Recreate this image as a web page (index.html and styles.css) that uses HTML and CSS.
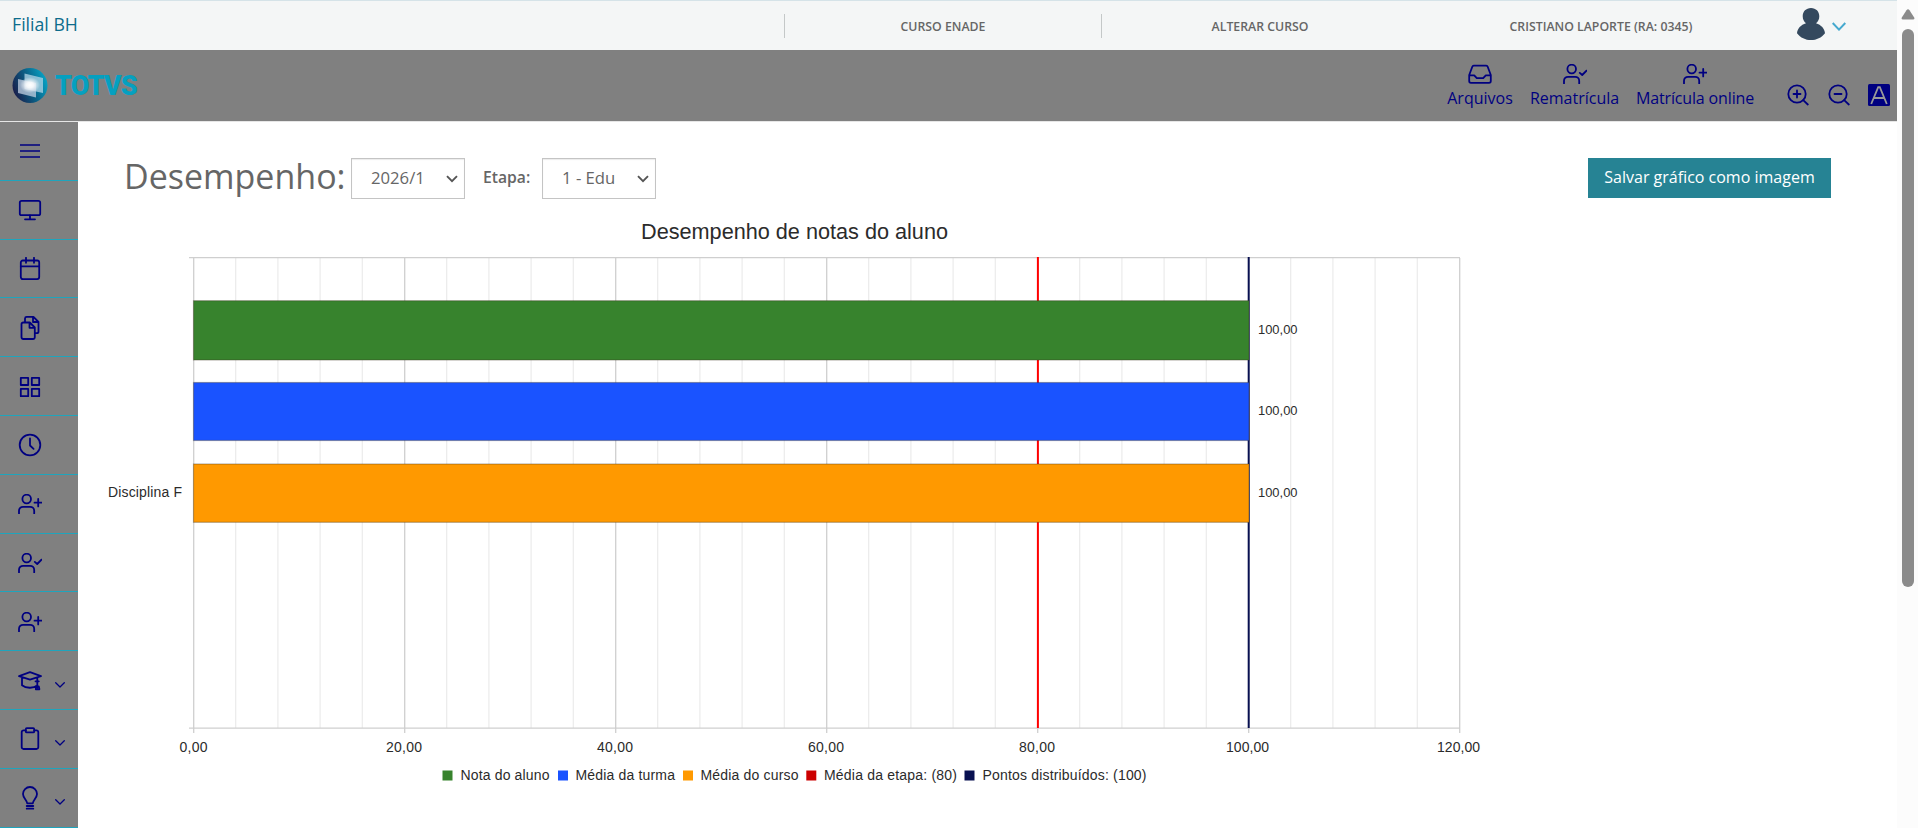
FILE: index.html
```html
<!DOCTYPE html>
<html lang="pt-BR">
<head>
<meta charset="utf-8">
<title>Desempenho</title>
<link rel="stylesheet" href="styles.css">
</head>
<body>
<svg class="defs" width="0" height="0">
  <defs>
    <symbol id="user-plus" viewBox="0 0 24 20"><circle cx="8.7" cy="5" r="4.3"/><path d="M1 19.5v-2.7a4 4 0 0 1 4-4h7.200a4 4 0 0 1 4 4v2.700M20.200 5v7.400M16.500 8.700h7.400"/></symbol>
    <symbol id="user-check" viewBox="0 0 24 20"><circle cx="8.700" cy="5" r="4.300"/><path d="M1 19.500v-2.700a4 4 0 0 1 4-4h7.200a4 4 0 0 1 4 4v2.700M16.800 8.900l2.400 2.100 4.300-4.400"/></symbol>
    <symbol id="chev" viewBox="0 0 10 6"><path d="M.7.7 5 5 9.300.7"/></symbol>
  </defs>
</svg>
<div class="app">
  <div class="page">
    <header class="topbar">
      <div class="branch"><span class="t-branch">Filial BH</span></div>
      <div class="cell">
        <span class="t-enade">CURSO ENADE</span>
      </div>
      <div class="cell">
        <span class="t-alterar">ALTERAR CURSO</span>
      </div>
      <div class="cell last">
        <span class="t-user">CRISTIANO LAPORTE (RA: 0345)</span>
      </div>
      <div class="account">
        <svg class="avatar" width="30" height="32" viewBox="0 0 30 32"><path d="M15 0c5 0 8.300 3.600 8.300 8.200 0 3-1.300 5.500-3.300 7 5.200 1.600 8.600 5.300 9 10C25.500 29.800 20.500 32 15 32S4.500 29.800 1 25.200c.4-4.700 3.800-8.400 9-10-2-1.500-3.300-4-3.300-7C6.700 3.600 10 0 15 0z"/></svg>
        <svg class="caret" width="14" height="9" viewBox="0 0 14 9"><path d="M.7 1 7 7.600 13.300 1"/></svg>
      </div>
    </header>

    <div class="header">
      <div class="logo">
        <svg width="36" height="36" viewBox="0 0 36 36">
          <defs>
            <linearGradient id="ball" x1="0" y1=".7" x2="1" y2=".3"><stop offset="0" stop-color="#1a1a48"/><stop offset=".5" stop-color="#0b5f85"/><stop offset="1" stop-color="#06a6c8"/></linearGradient>
            <radialGradient id="glow"><stop offset="0" stop-color="#fff"/><stop offset=".35" stop-color="#fff" stop-opacity=".85"/><stop offset="1" stop-color="#fff" stop-opacity="0"/></radialGradient>
          </defs>
          <circle cx="18" cy="17.500" r="17.500" fill="url(#ball)"/>
          <path d="M12.500 5.500 31 10v15l-18.500-4z" fill="#a9cfe2" opacity=".8"/>
          <path d="M6 11l18 4v14.500L6 25z" fill="#c3cfe2" opacity=".75"/>
          <ellipse cx="18" cy="17" rx="10" ry="8" fill="url(#glow)"/>
        </svg>
        <span class="wordmark">TOTVS</span>
      </div>
      <nav class="shortcuts">
        <a class="shortcut"><svg class="ic" width="24" height="20" viewBox="0 0 24 20"><path d="M1.200 11v6a1.800 1.800 0 0 0 1.800 1.800h18a1.800 1.800 0 0 0 1.800-1.800v-6L19.700 2.700a1.500 1.500 0 0 0-1.400-1H5.700a1.500 1.500 0 0 0-1.400 1zM1.200 11.300h5l2.600 2.900h6.400l2.600-2.900h5"/></svg><span class="t-arq">Arquivos</span></a>
        <a class="shortcut s2"><svg class="ic" width="24" height="20"><use href="#user-check"/></svg><span class="t-rem">Rematrícula</span></a>
        <a class="shortcut s3"><svg class="ic" width="24" height="20"><use href="#user-plus"/></svg><span class="t-mat">Matrícula online</span></a>
      </nav>
      <div class="tools">
        <svg class="ic" width="22" height="22" viewBox="0 0 22 22"><circle cx="10" cy="10" r="8.700"/><path d="M16.200 16.200l4.600 4.300M10 6.500v7M6.500 10h7"/></svg>
        <svg class="ic" width="22" height="22" viewBox="0 0 22 22"><circle cx="10" cy="10" r="8.700"/><path d="M16.200 16.200l4.600 4.300M6.500 10h7"/></svg>
        <svg class="contrast" width="22" height="22" viewBox="0 0 22 22"><rect width="22" height="22" rx="1.500"/><path d="M3.200 20 10.200 3.200h1.600L18.800 20M5.800 14h10.400"/></svg>
      </div>
    </div>

    <div class="body">
      <nav class="sidebar">
        <a class="item"><svg class="ic menu" width="24" height="24" viewBox="0 0 24 24"><path d="M2 6h20M2 12h20M2 18h20"/></svg></a>
        <a class="item"><svg class="ic" width="24" height="24" viewBox="0 0 24 24"><rect x="1.800" y="2.800" width="20.400" height="14.400" rx="1.800"/><path d="M12 17.500v3.500M7 21.300h10"/></svg></a>
        <a class="item"><svg class="ic" width="24" height="24" viewBox="0 0 24 24"><rect x="2.800" y="3.500" width="18.400" height="18.600" rx="2"/><path d="M2.800 9.300h18.400M8 .8v5M16 .8v5"/></svg></a>
        <a class="item"><svg class="ic" width="24" height="24" viewBox="0 0 24 24"><path d="M7 6V2.500A1.700 1.700 0 0 1 8.700.9h6.800L20.500 6v9.500a1.700 1.700 0 0 1-1.700 1.700h-1.500M15 1.200V6h5.200M5.200 6.500h6.600l5 5v9.800a1.700 1.700 0 0 1-1.700 1.700H5.200a1.700 1.700 0 0 1-1.700-1.700V8.200a1.700 1.700 0 0 1 1.700-1.700zM11.500 6.800v5h5"/></svg></a>
        <a class="item"><svg class="ic" width="24" height="24" viewBox="0 0 24 24"><path d="M2.800 2.800h7.400v7.200H2.800zM13.800 2.800h7.400v7.200h-7.400zM2.800 13.800h7.400v7.400H2.800zM13.800 13.800h7.400v7.400h-7.400z"/></svg></a>
        <a class="item"><svg class="ic" width="24" height="24" viewBox="0 0 24 24"><circle cx="12" cy="12" r="10.300"/><path d="M12 5.500v7l3.600 3.400"/></svg></a>
        <a class="item"><svg class="ic" width="24" height="20"><use href="#user-plus"/></svg></a>
        <a class="item"><svg class="ic" width="24" height="20"><use href="#user-check"/></svg></a>
        <a class="item"><svg class="ic" width="24" height="20"><use href="#user-plus"/></svg></a>
        <a class="item"><svg class="ic" width="24" height="24" viewBox="0 0 24 24"><path d="M1 7.200 12 3.200l11 4-11 3.500zM4 8.800v7.500c4 3.200 11.500 3.200 15 .5M19.300 8.500V19"/><path d="M17.500 12.300h3.300M18 17.500h2.800l.6 2.800h-3.600z"/></svg><svg class="ic more" width="10" height="6"><use href="#chev"/></svg></a>
        <a class="item"><svg class="ic" width="24" height="24" viewBox="0 0 24 24"><path d="M7.800 3.400H5.500a1.800 1.800 0 0 0-1.800 1.800v15a1.800 1.800 0 0 0 1.800 1.800h13a1.800 1.800 0 0 0 1.800-1.800v-15a1.800 1.800 0 0 0-1.800-1.800h-2.300"/><rect x="7.800" y="1.200" width="8.400" height="4.200" rx="1"/></svg><svg class="ic more" width="10" height="6"><use href="#chev"/></svg></a>
        <a class="item"><svg class="ic" width="24" height="24" viewBox="0 0 24 24"><path d="M9.200 17.300c0-3-4.200-5-4.200-9.300a7 7 0 0 1 14 0c0 4.300-4.200 6.300-4.200 9.300zM8.700 20h6.600M8.700 22.700h6.600"/></svg><svg class="ic more" width="10" height="6"><use href="#chev"/></svg></a>
      </nav>

      <main class="content">
        <div class="filters">
          <h1 class="title"><span class="t-title">Desempenho:</span></h1>
          <div class="select"><span class="t-year">2026/1</span><svg width="12" height="8" viewBox="0 0 12 8"><path d="M1 1.200l5 5 5-5"/></svg></div>
          <label class="etapa"><span class="t-etapa">Etapa:</span></label>
          <div class="select"><span class="t-edu">1 - Edu</span><svg width="12" height="8" viewBox="0 0 12 8"><path d="M1 1.200l5 5 5-5"/></svg></div>
          <button class="save"><span class="t-save">Salvar gráfico como imagem</span></button>
        </div>
        <svg class="chart" width="1400" height="590" viewBox="100 210 1400 590">
          <path class="minor" d="M235.700 258V728M277.900 258V728M320.100 258V728M362.300 258V728M446.700 258V728M488.900 258V728M531.100 258V728M573.300 258V728M657.700 258V728M699.900 258V728M742.100 258V728M784.300 258V728M868.700 258V728M910.900 258V728M953.100 258V728M995.300 258V728M1079.700 258V728M1121.900 258V728M1164.100 258V728M1206.300 258V728M1290.700 258V728M1332.900 258V728M1375.100 258V728M1417.300 258V728"/>
          <path class="major" d="M193.700 258V733M404.700 258V733M615.700 258V733M826.700 258V733M1037.700 258V733M1248.700 258V733M1459.700 258V733M189 257.700H1460M189 728.200H1460"/>
          <path class="goal" d="M1037.900 257V728"/>
          <path class="total" d="M1248.700 257V728"/>
          <g class="bars">
            <rect x="193.500" y="300.700" width="1055.500" height="59.300" fill="#37832d"/>
            <rect x="193.500" y="382.500" width="1055.500" height="58" fill="#1a53ff"/>
            <rect x="193.500" y="464" width="1055.500" height="58.300" fill="#ff9900"/>
          </g>
          <text class="ctitle" x="641" y="239" textLength="307" lengthAdjust="spacingAndGlyphs">Desempenho de notas do aluno</text>
          <text x="1258" y="334" textLength="39.500" lengthAdjust="spacingAndGlyphs">100,00</text>
          <text x="1258" y="415" textLength="39.500" lengthAdjust="spacingAndGlyphs">100,00</text>
          <text x="1258" y="497" textLength="39.500" lengthAdjust="spacingAndGlyphs">100,00</text>
          <g class="axis">
            <text x="108" y="497" textLength="74">Disciplina F</text>
            <text x="179.500" y="752" textLength="28">0,00</text>
            <text x="386" y="752" textLength="36">20,00</text>
            <text x="597" y="752" textLength="36">40,00</text>
            <text x="808" y="752" textLength="36">60,00</text>
            <text x="1019" y="752" textLength="36">80,00</text>
            <text x="1226" y="752" textLength="43">100,00</text>
            <text x="1437" y="752" textLength="43">120,00</text>
            <text x="460.500" y="780" textLength="89">Nota do aluno</text>
            <text x="575.500" y="780" textLength="99.500">Média da turma</text>
            <text x="700.500" y="780" textLength="98">Média do curso</text>
            <text x="824" y="780" textLength="133">Média da etapa: (80)</text>
            <text x="982.500" y="780" textLength="164">Pontos distribuídos: (100)</text>
          </g>
          <g>
            <rect x="442.500" y="770.500" width="10" height="10" fill="#37832d"/>
            <rect x="558" y="770.500" width="10" height="10" fill="#1a53ff"/>
            <rect x="683" y="770.500" width="10" height="10" fill="#ff9900"/>
            <rect x="806.300" y="770.500" width="10" height="10" fill="#cc0000"/>
            <rect x="964.500" y="770.500" width="10" height="10" fill="#081050"/>
          </g>
        </svg>
      </main>
    </div>
  </div>
  <div class="scrollbar">
    <svg width="14" height="11" viewBox="0 0 14 11"><path d="M5.500 1.200 L.8 8.500 Q0 10.500 2 10.500 H12 Q14 10.500 13.200 8.500 L8.500 1.200 Q7-.6 5.500 1.200z"/></svg>
    <div class="thumb"></div>
  </div>
</div>
</body>
</html>
```
FILE: styles.css
```css
* { box-sizing: border-box; }
body {
  margin: 0;
  height: 828px;
  overflow: hidden;
  background: #fff;
  font-family: "Open Sans", "Noto Sans", sans-serif;
  color: #666;
}
.defs { display: block; }
.app { display: flex; height: 828px; }
.page { width: 1897px; }
.topbar {
  display: flex;
  height: 50px;
  border-top: 1px solid #d5e3e8;
  background: #f4f6f6;
}
.branch { width: 784px; padding: 12px 0 0 12px; font-size: 17.7px; line-height: 22px; color: #0c6c8c; }
.cell {
  display: flex;
  width: 317px;
  height: 24px;
  margin-top: 13px;
  align-items: center;
  justify-content: center;
  border-left: 1px solid #c4c8c8;
  font-size: 12.3px;
  font-weight: 600;
}
.cell.last { width: 365px; border-left-color: transparent; }
.account { display: flex; gap: 6px; padding: 7px 0 0 13px; }
.avatar { fill: #34495e; }
.caret { margin-top: 14px; fill: none; stroke: #45a9cf; stroke-width: 2; }
.header {
  display: flex;
  height: 72px;
  background: #808080;
  border-bottom: 1px solid #e6e6e6;
}
.logo { display: flex; flex: 1; gap: 7px; padding: 18px 0 0 12px; }
.wordmark { font: 900 27px/37px Roboto, "Open Sans", sans-serif; letter-spacing: -.9px; color: #05a0c0; }
.ic { display: block; flex: none; fill: none; stroke: #000080; stroke-width: 1.8; stroke-linejoin: round; stroke-linecap: round; }
.shortcuts { display: flex; padding-top: 14px; gap: 17px; }
.shortcut { display: flex; flex-direction: column; align-items: center; color: #000080; font-size: 16px; line-height: 24px; width: 66px; white-space: nowrap; }
.shortcut span { margin-top: 2px; }
.s2 { width: 89px; }
.s3 { width: 118px; letter-spacing: -.15px; }
.tools { display: flex; gap: 19px; width: 143px; padding: 34px 0 0 33px; }
.contrast { margin-left: -1px; fill: #000080; }
.contrast path { fill: none; stroke: #999; stroke-width: 1.8; }
.body { display: flex; height: 706px; }
.sidebar { width: 78px; background: #808080; }
.item {
  display: flex;
  height: 58.8px;
  align-items: center;
  padding: 1px 0 0 18px;
  border-bottom: 1px solid #1fa5bd;
}
.menu { stroke-width: 1.4; stroke-linecap: butt; }
.more { margin: 8px 0 0 13px; stroke-width: 1.3; }
.content { flex: 1; }
.filters { display: flex; height: 88px; padding: 36px 66px 0 46px; }
.title { margin: 0; width: 227px; font-size: 34px; font-weight: 400; letter-spacing: 0; line-height: 37px; white-space: nowrap; }
.title span { display: block; }
.select {
  display: flex;
  width: 114px;
  height: 41px;
  padding: 0 6px 0 19px;
  align-items: center;
  justify-content: space-between;
  border: 1px solid #c4c4c4;
  box-shadow: inset 0 1px 1px rgba(0, 0, 0, .08);
  font-size: 16.7px;
  white-space: nowrap;
}
.select span { margin-top: -2px; }
.select svg { fill: none; stroke: #555; stroke-width: 1.9; }
.etapa { width: 77px; padding-left: 18px; font-size: 15.7px; font-weight: 600; line-height: 38px; white-space: nowrap; }
.save {
  width: 243px;
  height: 40px;
  margin-left: auto;
  padding: 0 0 2px;
  border: 0;
  background: #268394;
  color: #fff;
  font: 400 16px "Open Sans", sans-serif;
  white-space: nowrap;
}
.chart { display: block; margin-left: 22px; font: 13px "Liberation Sans", Arial, sans-serif; fill: #2b2b2b; }
.axis { font-size: 14px; }
.ctitle { font-size: 22px; }
.minor { stroke: #ebebeb; stroke-width: 1.2; }
.major { stroke: #cfcfcf; stroke-width: 1.3; }
.goal { stroke: #ff0000; stroke-width: 2; }
.total { stroke: #081050; stroke-width: 2; }
.bars rect { stroke: rgba(60, 50, 30, .35); stroke-width: 1.2; }
.scrollbar { width: 21px; padding: 9px 0 0 4px; background: #fcfcfc; }
.scrollbar svg { display: block; fill: #8b8b8b; }
.thumb { width: 12px; height: 558px; margin: 9px 0 0 1px; border-radius: 6px; background: #8b8b8b; }
.t-branch, .t-enade, .t-alterar, .t-user { white-space: nowrap; }
```
